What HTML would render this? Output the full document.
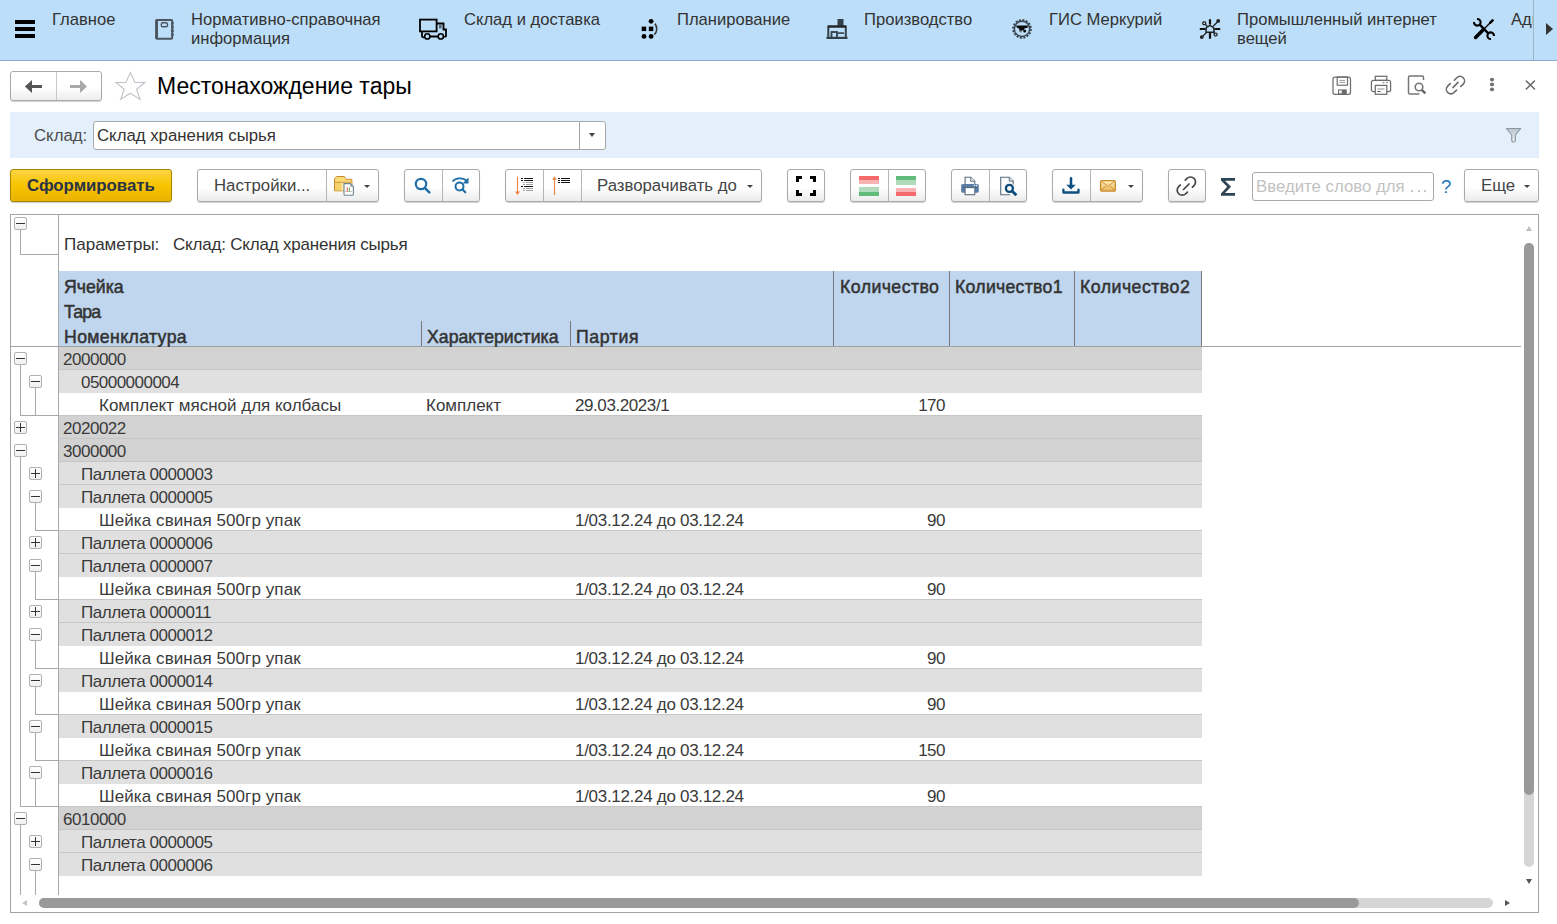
<!DOCTYPE html>
<html><head><meta charset="utf-8">
<style>
*{box-sizing:border-box;margin:0;padding:0}
html,body{width:1557px;height:924px;overflow:hidden;background:#fff;font-family:"Liberation Sans",sans-serif;color:#333}
.a{position:absolute}
.t{position:absolute;white-space:nowrap;line-height:1}
#top{position:absolute;left:0;top:0;width:1557px;height:61px;background:#bcdef8;border-bottom:1px solid #8aaccc}
.nav{font-size:16.6px;color:#333;line-height:19px}
.btn{position:absolute;border:1px solid #aaa;border-radius:3px;background:linear-gradient(#fff 0%,#fff 55%,#ececec 100%);box-shadow:0 1px 1px rgba(0,0,0,.18)}
.div{position:absolute;top:0;bottom:0;width:1px;background:#b5b5b5}
.tri{position:absolute;width:0;height:0;border-left:3px solid transparent;border-right:3px solid transparent;border-top:3px solid #444}
.row{position:absolute;left:59px;width:1143px;height:23px}
.l1{background:#d2d2d2}
.l2{background:#e0e0e0}
.l3{background:#fff}
.bb{border-bottom:1px solid #c4c4c4}
.rt{position:absolute;top:4px;font-size:17px;line-height:18px;color:#3a3a3a;white-space:nowrap}
.box{position:absolute;width:13px;height:13px;border:1px solid #b0b0b0;border-radius:2px;background:linear-gradient(#fff,#f0f0f0)}
.box:before{content:"";position:absolute;left:1px;top:5px;width:9px;height:1px;background:#333}
.box.p:after{content:"";position:absolute;left:5px;top:1px;width:1px;height:9px;background:#333}
.vl{position:absolute;width:1px;background:#a8a8a8}
.hl{position:absolute;height:1px;background:#a8a8a8}
.hd{position:absolute;font-size:16.8px;font-weight:bold;color:#333;white-space:nowrap;line-height:1}
</style></head><body>

<!-- TOP SECTIONS BAR -->
<div id="top">
  <!-- hamburger -->
  <div class="a" style="left:15px;top:20px;width:20px;height:4px;background:#000"></div>
  <div class="a" style="left:15px;top:27px;width:20px;height:4px;background:#000"></div>
  <div class="a" style="left:15px;top:34px;width:20px;height:4px;background:#000"></div>
  <div class="t nav" style="left:52px;top:10px">Главное</div>

  <svg class="a" style="left:154px;top:18px" width="22" height="22" viewBox="0 0 22 22">
    <rect x="2.2" y="1.9" width="16" height="18.9" rx="1" fill="none" stroke="#4a5560" stroke-width="2"/>
    <rect x="1.5" y="1.5" width="2.5" height="19.5" fill="#4a5560"/>
    <rect x="7.3" y="4.8" width="6.2" height="4" rx="1.6" fill="none" stroke="#4a5560" stroke-width="1.4"/>
    <path d="M18.5 4v14" stroke="#4a5560" stroke-width="2.4" stroke-dasharray="2.4 1.4"/>
  </svg>
  <div class="t nav" style="left:191px;top:10px">Нормативно-справочная<br>информация</div>

  <svg class="a" style="left:418px;top:17px" width="31" height="23" viewBox="0 0 31 23">
    <rect x="2" y="2.6" width="16.6" height="11.8" fill="none" stroke="#000" stroke-width="1.8"/>
    <path d="M19 6.5h6.5v6h2.5v6.5l-1.6 1.3" fill="none" stroke="#000" stroke-width="1.8"/>
    <rect x="21" y="7.5" width="2.6" height="4" fill="#567"/>
    <path d="M4 14.5v5l2 1.3M12 19.5h8" fill="none" stroke="#000" stroke-width="1.8"/>
    <circle cx="9.3" cy="19.4" r="2.6" fill="none" stroke="#000" stroke-width="1.6"/>
    <circle cx="22.8" cy="19.4" r="2.6" fill="none" stroke="#000" stroke-width="1.6"/>
  </svg>
  <div class="t nav" style="left:464px;top:10px">Склад и доставка</div>

  <svg class="a" style="left:638px;top:18px" width="22" height="22" viewBox="0 0 22 22">
    <circle cx="13.1" cy="3.3" r="2.4" fill="#000"/>
    <rect x="3.7" y="8.6" width="4.5" height="4.5" fill="#000"/>
    <rect x="10.8" y="8.6" width="4.5" height="4.5" fill="#000"/>
    <circle cx="6" cy="18.4" r="2.4" fill="#000"/>
    <circle cx="13.1" cy="18.4" r="2.4" fill="#000"/>
    <path d="M16.8 5.6c2.6 2.6 2.6 8.6 -0.5 11" fill="none" stroke="#333" stroke-width="1.5"/>
  </svg>
  <div class="t nav" style="left:677px;top:10px">Планирование</div>

  <svg class="a" style="left:826px;top:18px" width="22" height="22" viewBox="0 0 22 22">
    <rect x="11.5" y="1" width="6" height="7" fill="#33404a"/>
    <path d="M2.3 20V8.5h17.5V20" fill="none" stroke="#33404a" stroke-width="2"/>
    <rect x="2" y="7.5" width="18" height="2" fill="#222"/>
    <rect x="5.5" y="14" width="5.5" height="6" fill="none" stroke="#33404a" stroke-width="1.8"/>
    <rect x="12" y="14.3" width="6" height="1.6" fill="#33404a"/>
    <rect x="0.5" y="18.8" width="21" height="2.2" fill="#33404a"/>
  </svg>
  <div class="t nav" style="left:864px;top:10px">Производство</div>

  <svg class="a" style="left:1011px;top:18px" width="22" height="22" viewBox="0 0 22 22"><circle cx="11" cy="10.9" r="8.9" fill="none" stroke="#3a4652" stroke-width="1.8" stroke-dasharray="2.1 1.4"/><circle cx="11" cy="10.9" r="7.6" fill="none" stroke="#3a4652" stroke-width="1.4"/><path d="M5.2 7.4H17L16.5 9.8L13.4 10.4L12.6 12.2L10.3 12.8L9 14.2L7.6 10.2L5.6 9.4Z" fill="#0a0a0a"/><circle cx="13.7" cy="12.9" r="1.5" fill="#0a0a0a"/><path d="M8.5 11.5L10 14.5L11.3 12.2" fill="none" stroke="#7a8794" stroke-width="0.9"/></svg>
  <div class="t nav" style="left:1049px;top:10px">ГИС Меркурий</div>

  <svg class="a" style="left:1199px;top:18px" width="22" height="22" viewBox="0 0 22 22"><path d="M11 7.3L14.6 9.6L15.2 14.2H7L7.2 9.6Z" fill="none" stroke="#222" stroke-width="1.5" stroke-linejoin="round"/><path d="M11 1.2V6.5M11 14.8V20.8M0.8 11H6.5M15.5 11H21.2" stroke="#111" stroke-width="2.2"/><path d="M14.2 8.2L19.6 2.8M8 14L2.6 19.4M6.3 6.3L8.2 8.2M14.2 14.2L15.4 15.4" stroke="#222" stroke-width="1.3"/><circle cx="19.2" cy="2.9" r="1.9" fill="#222"/><circle cx="2.8" cy="19.1" r="1.9" fill="#222"/><circle cx="5.2" cy="5.2" r="1.5" fill="none" stroke="#222" stroke-width="1.3"/><circle cx="16.6" cy="16.6" r="1.5" fill="none" stroke="#222" stroke-width="1.3"/></svg>
  <div class="t nav" style="left:1237px;top:10px">Промышленный интернет<br>вещей</div>

  <svg class="a" style="left:1472px;top:17px" width="24" height="24" viewBox="0 0 24 24"><path d="M3.6 20.4L10.5 13.5" stroke="#000" stroke-width="3.6" stroke-linecap="round"/><path d="M10.5 13.5L19.5 4.5" stroke="#000" stroke-width="1.5"/><path d="M18.3 5.7L20.6 3.4" stroke="#000" stroke-width="2.6" stroke-linecap="round"/><path d="M7.2 7.2L16.8 16.8" stroke="#000" stroke-width="2.4"/><path d="M5.01 2.01A3.3 3.3 0 1 1 2.01 5.01" fill="none" stroke="#000" stroke-width="2.1"/><path d="M18.99 21.99A3.3 3.3 0 1 1 21.99 18.99" fill="none" stroke="#000" stroke-width="2.1"/></svg>
  <div class="a" style="left:1511px;top:0;width:22px;height:60px;overflow:hidden"><div class="t nav" style="left:0;top:10px">Администрирование</div></div>
  <div class="a" style="left:1533px;top:0;width:1px;height:60px;background:#9db5cb"></div>
  <div class="a" style="left:1546px;top:23px;width:0;height:0;border-top:6px solid transparent;border-bottom:6px solid transparent;border-left:7px solid #333"></div>
</div>


<!-- TITLE ROW -->
<div class="btn" style="left:10px;top:71px;width:92px;height:30px"></div>
<div class="div" style="left:56px;top:72px;height:28px;background:#c8c8c8"></div>
<svg class="a" style="left:20px;top:76px" width="26" height="22" viewBox="0 0 26 22"><path d="M4.9 10.5L12 4V9H22V12H12V17Z" fill="#555"/></svg>
<svg class="a" style="left:66px;top:76px" width="26" height="22" viewBox="0 0 26 22"><path d="M20.9 10.5L14 4V9H4V12H14V17Z" fill="#a8a8a8"/></svg>
<svg class="a" style="left:110px;top:66px" width="40" height="40" viewBox="0 0 40 40"><path d="M20.4 6.5L24.9 16.5H34.8L26.6 23.2L30.2 33.5L20.4 27.2L10.6 33.5L14.2 23.2L6 16.5H15.9Z" fill="none" stroke="#bfc4c9" stroke-width="1.1" stroke-linejoin="miter"/></svg>
<div class="t" style="left:157px;top:75px;font-size:23px;color:#000">Местонахождение тары</div>

<svg class="a" style="left:1332px;top:76px" width="21" height="19" viewBox="0 0 21 19"><path d="M3 1h13.5a2 2 0 0 1 2 2v13.3a2 2 0 0 1-2 2H3a2 2 0 0 1-2-2V3a2 2 0 0 1 2-2z" fill="none" stroke="#6e6e6e" stroke-width="1.25"/><rect x="5.2" y="1" width="10.3" height="8.2" fill="none" stroke="#6e6e6e" stroke-width="1.2"/><path d="M7.5 4.4h5.6M7.5 6.4h5.6" stroke="#9a9a9a" stroke-width="1"/><rect x="6" y="13.4" width="8.7" height="4.8" fill="#6a6a6a"/><rect x="7" y="14.4" width="2.8" height="2.9" fill="#f4f4f4"/></svg>
<svg class="a" style="left:1370px;top:75px" width="22" height="21" viewBox="0 0 22 21"><rect x="5.3" y="1.3" width="11.5" height="4.1" fill="none" stroke="#6e6e6e" stroke-width="1.25"/><path d="M5 16.5H3.2a1.8 1.8 0 0 1-1.8-1.8V7.2a1.8 1.8 0 0 1 1.8-1.8h15.6a1.8 1.8 0 0 1 1.8 1.8v7.5a1.8 1.8 0 0 1-1.8 1.8H17" fill="none" stroke="#6e6e6e" stroke-width="1.25"/><rect x="5.3" y="10.4" width="11.5" height="8.9" fill="#fff" stroke="#6e6e6e" stroke-width="1.25"/><path d="M7.3 14h7.2" stroke="#999" stroke-width="1.1"/><path d="M7.3 16.5h3.4" stroke="#666" stroke-width="1.1"/><path d="M12.8 7.7h1.6M16.2 7.7h1.6" stroke="#888" stroke-width="1.2"/></svg>
<svg class="a" style="left:1407px;top:75px" width="21" height="21" viewBox="0 0 21 21"><path d="M12.5 19H3a1.5 1.5 0 0 1-1.5-1.5v-15A1.5 1.5 0 0 1 3 1h12a1.5 1.5 0 0 1 1.5 1.5v2.5" fill="none" stroke="#777" stroke-width="1.5"/><circle cx="12" cy="12" r="3.8" fill="none" stroke="#777" stroke-width="1.6"/><path d="M14.8 14.8l3.5 3.5" stroke="#666" stroke-width="2.5"/></svg>
<svg class="a" style="left:1444px;top:74px" width="24" height="24" viewBox="0 0 24 24"><path d="M10.3 6.2L12.8 3.7A4.5 4.5 0 0 1 19.2 10.1L16.8 12.5M6.2 9.6L3.7 12.1A4.5 4.5 0 0 0 10.1 18.5L12.5 16.1M8.9 13.6L14 8.4" fill="none" stroke="#6a6a6a" stroke-width="1.6" stroke-linecap="round"/></svg>
<svg class="a" style="left:1488px;top:76px" width="8" height="18" viewBox="0 0 8 18"><ellipse cx="4" cy="3.6" rx="2.1" ry="1.9" fill="#727272"/><ellipse cx="4" cy="8.4" rx="2.1" ry="1.9" fill="#727272"/><ellipse cx="4" cy="13.4" rx="2.1" ry="1.9" fill="#727272"/></svg>
<svg class="a" style="left:1524px;top:78px" width="13" height="13" viewBox="0 0 13 13"><path d="M2.3 3L10.5 11M10.5 3L2.3 11" stroke="#6a6a6a" stroke-width="1.6" stroke-linecap="round"/></svg>

<!-- FILTER PANEL -->
<div class="a" style="left:10px;top:112px;width:1529px;height:46px;background:#e3effb"></div>
<div class="t" style="left:34px;top:128px;font-size:16.8px;color:#4d4d4d">Склад:</div>
<div class="a" style="left:93px;top:121px;width:513px;height:29px;background:#fff;border:1px solid #a9a9a9;border-radius:3px"></div>
<div class="a" style="left:579px;top:122px;width:1px;height:27px;background:#a6a6a6"></div>
<div class="a" style="left:589px;top:133px;width:0;height:0;border-left:3px solid transparent;border-right:3px solid transparent;border-top:4px solid #444"></div>
<div class="t" style="left:97px;top:128px;font-size:16.8px;color:#333">Склад хранения сырья</div>
<svg class="a" style="left:1504px;top:126px" width="20" height="18" viewBox="0 0 20 18"><defs><linearGradient id="fun" x1="0" y1="0" x2="0" y2="1"><stop offset="0" stop-color="#bcc4cd"/><stop offset="1" stop-color="#f0f1f3"/></linearGradient></defs><path d="M2.5 2.5H16.7L11.4 9V14.2A1.85 1.85 0 0 1 7.7 14.2V9Z" fill="url(#fun)" stroke="#8796a5" stroke-width="1.1" stroke-linejoin="round"/></svg>

<!-- TOOLBAR -->
<div class="a" style="left:10px;top:169px;width:162px;height:33px;border:1px solid #a88500;border-radius:3px;background:linear-gradient(#fdd444,#f7c400 50%,#ebb300);box-shadow:0 1px 1px rgba(0,0,0,.2)"></div>
<div class="t" style="left:27px;top:178px;font-size:16.8px;font-weight:bold;color:#2b3346">Сформировать</div>

<div class="btn" style="left:197px;top:169px;width:182px;height:33px"></div>
<div class="div" style="left:326px;top:170px;height:31px"></div>
<div class="t" style="left:214px;top:178px;font-size:16.8px;color:#444">Настройки...</div>
<svg class="a" style="left:332px;top:174px" width="24" height="24" viewBox="0 0 24 24"><path d="M2.5 16.8V4.6L5 2.5H12.3L14.3 5.4H19.9V16.8Z" fill="#fbdc78" stroke="#c98a2e" stroke-width="1"/><path d="M2.5 8.3H19.9" stroke="#c98a2e" stroke-width="1"/><path d="M3 8.8H19.4V16.3H3z" fill="#f5d36a"/><path d="M9.5 8.8H19.4V16.3H9.5z" fill="#fdeaa8"/><path d="M12 9.6H18.3L21.4 12.7V20.3A1 1 0 0 1 20.4 21.3H13A1 1 0 0 1 12 20.3Z" fill="#fff" stroke="#6f8391" stroke-width="1.1"/><path d="M18.3 9.6V12.7H21.4" fill="#8a9aa6"/><path d="M15.4 17.5V13.5" stroke="#e23b2a" stroke-width="0.9"/><path d="M17.4 17.5V13.5" stroke="#4ea83a" stroke-width="0.9"/><path d="M13.2 17.5H20" stroke="#999" stroke-width="0.6"/></svg>
<div class="tri" style="left:364px;top:185px"></div>

<div class="btn" style="left:404px;top:169px;width:76px;height:33px"></div>
<div class="div" style="left:442px;top:170px;height:31px"></div>
<svg class="a" style="left:413px;top:176px" width="20" height="20" viewBox="0 0 20 20"><circle cx="8" cy="8" r="5.2" fill="none" stroke="#1f6ea8" stroke-width="2.2"/><path d="M11.8 11.8l4.5 4.5" stroke="#1f6ea8" stroke-width="2.6" stroke-linecap="round"/></svg>
<svg class="a" style="left:450px;top:175px" width="22" height="22" viewBox="0 0 22 22"><path d="M2.5 6.5a9 7 0 0 1 14-1" fill="none" stroke="#1f6ea8" stroke-width="1.8"/><path d="M18.5 2.5v6h-6z" fill="#1f6ea8"/><circle cx="9.5" cy="11.5" r="4" fill="none" stroke="#1f6ea8" stroke-width="2"/><path d="M12.3 14.3l3 3" stroke="#1f6ea8" stroke-width="2.2" stroke-linecap="round"/></svg>

<div class="btn" style="left:505px;top:169px;width:257px;height:33px"></div>
<div class="div" style="left:543px;top:170px;height:31px"></div>
<div class="div" style="left:581px;top:170px;height:31px"></div>
<svg class="a" style="left:510px;top:174px" width="28" height="24" viewBox="0 0 28 24"><path d="M7.5 2.8V19" stroke="#f0823f" stroke-width="1.1"/><path d="M5 17.6H10L7.5 21z" fill="#f0823f"/><path d="M11 4.5H13M14.1 4.5H23M11 6.5H13M14.1 6.5H23M11 12.5H13M14.1 12.5H23" stroke="#111" stroke-width="1.1"/><path d="M13 8.5H15M16 8.5H23M13 10.5H15M16 10.5H23M13 14.5H15M16 14.5H23M13 16.5H15M16 16.5H23" stroke="#999" stroke-width="0.9"/></svg>
<svg class="a" style="left:548px;top:174px" width="26" height="24" viewBox="0 0 26 24"><path d="M6.5 5V21" stroke="#f0823f" stroke-width="1.1"/><path d="M4 5.8H9L6.5 2.6z" fill="#f0823f"/><path d="M10 4.5H12M13 4.5H22M10 6.5H12M13 6.5H22M10 8.5H12M13 8.5H22" stroke="#111" stroke-width="1.1"/></svg>
<div class="t" style="left:597px;top:178px;font-size:16.8px;color:#444">Разворачивать до</div>
<div class="tri" style="left:747px;top:185px"></div>

<div class="btn" style="left:787px;top:169px;width:38px;height:33px"></div>
<svg class="a" style="left:796px;top:176px" width="20" height="20" viewBox="0 0 20 20"><path d="M1.5 6V1.5H6M14 1.5H18.5V6M18.5 14V18.5H14M6 18.5H1.5V14" fill="none" stroke="#000" stroke-width="3"/></svg>

<div class="btn" style="left:850px;top:169px;width:76px;height:33px"></div>
<div class="div" style="left:888px;top:170px;height:31px"></div>
<div class="a" style="left:859px;top:176px;width:20px;height:4px;background:#f46a6a"></div>
<div class="a" style="left:859px;top:180px;width:20px;height:3.5px;background:#f8b3b3"></div>
<div class="a" style="left:859px;top:187px;width:20px;height:5px;background:#b0dcbc"></div>
<div class="a" style="left:859px;top:192px;width:20px;height:4px;background:#62bb7a"></div>
<div class="a" style="left:896px;top:176px;width:20px;height:4px;background:#62bb7a"></div>
<div class="a" style="left:896px;top:180px;width:20px;height:4.5px;background:#b0dcbc"></div>
<div class="a" style="left:896px;top:188px;width:20px;height:4px;background:#f8b3b3"></div>
<div class="a" style="left:896px;top:192px;width:20px;height:4px;background:#f46a6a"></div>

<div class="btn" style="left:951px;top:169px;width:76px;height:33px"></div>
<div class="div" style="left:989px;top:170px;height:31px"></div>
<svg class="a" style="left:958px;top:174px" width="24" height="24" viewBox="0 0 24 24"><path d="M7.1 10.2V3.2H12.7L16.8 7.3V10.2" fill="#fff" stroke="#5a6d80" stroke-width="1.1"/><path d="M12.7 3.2V7.3H16.8" fill="#eef2f6" stroke="#5a6d80" stroke-width="1"/><rect x="3.1" y="10" width="17.7" height="8.7" rx="1.6" fill="#5b7ea6"/><path d="M5 13.4H19" stroke="#3f5f86" stroke-width="1"/><rect x="7.1" y="13.6" width="9.7" height="7.1" fill="#fff" stroke="#5a6d80" stroke-width="1.1"/><circle cx="16.4" cy="11.6" r="0.75" fill="#fff"/><circle cx="18.5" cy="11.6" r="0.75" fill="#fff"/></svg>
<svg class="a" style="left:998px;top:174px" width="24" height="24" viewBox="0 0 24 24"><path d="M12 20.7H2.7V3.2H11.3L15.2 7.1V10.5" fill="#fafafa" stroke="#5a6d80" stroke-width="1.1"/><path d="M11.3 3.2V7.1H15.2" fill="#eef2f6" stroke="#5a6d80" stroke-width="1"/><circle cx="11.4" cy="14.4" r="3.5" fill="#fff" stroke="#0b4a7a" stroke-width="2.3"/><path d="M14 17L18.4 21.3" stroke="#0b4a7a" stroke-width="2.8"/></svg>

<div class="btn" style="left:1052px;top:169px;width:91px;height:33px"></div>
<div class="div" style="left:1090px;top:170px;height:31px"></div>
<svg class="a" style="left:1058px;top:174px" width="24" height="24" viewBox="0 0 24 24"><path d="M13 4.3V11" stroke="#0d4f80" stroke-width="2.5" stroke-linecap="round"/><path d="M8.2 10.8H17.7L13 15.5Z" fill="#0d4f80"/><path d="M5.4 15.6V18.5H20.5V15.6" fill="none" stroke="#0d4f80" stroke-width="2.3" stroke-linecap="round" stroke-linejoin="round"/></svg>
<svg class="a" style="left:1098px;top:178px" width="20" height="16" viewBox="0 0 20 16"><defs><linearGradient id="env" x1="0" y1="0" x2="0" y2="1"><stop offset="0" stop-color="#fdf0b8"/><stop offset="1" stop-color="#e8b55a"/></linearGradient></defs><rect x="2.6" y="2.7" width="14.7" height="10.4" rx="1.2" fill="url(#env)" stroke="#c98a2e" stroke-width="1.3"/><path d="M3.2 3.2L9.9 8.3L16.7 3.2M3.2 12.6L7.7 8M16.7 12.6L12.2 8" fill="none" stroke="#c98a2e" stroke-width="0.9"/></svg>
<div class="tri" style="left:1128px;top:185px"></div>

<div class="btn" style="left:1168px;top:169px;width:38px;height:33px"></div>
<svg class="a" style="left:1175px;top:174px" width="24" height="24" viewBox="0 0 24 24"><path d="M10.3 6.1L11.96 4.46A5 5 0 0 1 19.04 11.54L17.4 13.2M5.3 11L3.66 12.66A5 5 0 0 0 10.74 19.74L12.4 18.1M8.5 15.5L14 10" fill="none" stroke="#444" stroke-width="1.7" stroke-linecap="round"/></svg>
<svg class="a" style="left:1219px;top:176px" width="18" height="22" viewBox="0 0 18 22"><path d="M2 2H16V4.8H6L12 10.8L6 17H16V19.8H2V17.5L8.2 10.8L2 4.5Z" fill="#2d4454"/></svg>
<div class="a" style="left:1252px;top:172px;width:182px;height:29px;border:1px solid #a9a9a9;border-radius:3px;background:#fff"></div>
<div class="t" style="left:1256px;top:179px;font-size:16.8px;color:#c2c2c2">Введите слово для</div><div class="a" style="left:1411px;top:190px;width:2px;height:2px;background:#c8c8c8"></div><div class="a" style="left:1417.5px;top:190px;width:2px;height:2px;background:#c8c8c8"></div><div class="a" style="left:1423.5px;top:190px;width:2px;height:2px;background:#c8c8c8"></div>
<div class="t" style="left:1441px;top:178px;font-size:18.5px;color:#1a73c0">?</div>
<div class="btn" style="left:1464px;top:169px;width:75px;height:33px"></div>
<div class="t" style="left:1481px;top:178px;font-size:16.8px;color:#444">Еще</div>
<div class="tri" style="left:1524px;top:185px"></div>

<!-- TABLE -->
<div class="a" style="left:10px;top:214px;width:1529px;height:699px;border:1px solid #a3a3a3"></div>
<div class="vl" style="left:58px;top:215px;height:680px"></div>
<div class="box" style="left:14px;top:217px"></div>
<div class="vl" style="left:20px;top:230px;height:25px"></div>
<div class="hl" style="left:20px;top:254px;width:38px"></div>
<div class="t" style="left:64px;top:234px;font-size:17px;line-height:21px;color:#333">Параметры:</div>
<div class="t" style="left:173px;top:234px;font-size:17px;line-height:21px;color:#333;letter-spacing:-0.2px">Склад: Склад хранения сырья</div>
<div class="a" style="left:59px;top:271px;width:1143px;height:75px;background:#bfd6ee"></div>
<div class="a" style="left:10px;top:346px;width:1511px;height:1px;background:#a0a0a0"></div>
<div class="a" style="left:421px;top:321px;width:1px;height:25px;background:#7a7a7a"></div>
<div class="a" style="left:570px;top:321px;width:1px;height:25px;background:#7a7a7a"></div>
<div class="a" style="left:833px;top:271px;width:1px;height:75px;background:#7a7a7a"></div>
<div class="a" style="left:949px;top:271px;width:1px;height:75px;background:#7a7a7a"></div>
<div class="a" style="left:1074px;top:271px;width:1px;height:75px;background:#7a7a7a"></div>
<div class="a" style="left:1201px;top:271px;width:1px;height:75px;background:#7a7a7a"></div>
<div class="t" style="left:64px;top:277px;font-size:17.7px;line-height:normal;color:#333;-webkit-text-stroke:0.5px #333;letter-spacing:0px">Ячейка</div>
<div class="t" style="left:64px;top:302px;font-size:17.7px;line-height:normal;color:#333;-webkit-text-stroke:0.5px #333;letter-spacing:-0.8px">Тара</div>
<div class="t" style="left:64px;top:327px;font-size:17.7px;line-height:normal;color:#333;-webkit-text-stroke:0.5px #333;letter-spacing:0.36px">Номенклатура</div>
<div class="t" style="left:427px;top:327px;font-size:17.7px;line-height:normal;color:#333;-webkit-text-stroke:0.5px #333;letter-spacing:0px">Характеристика</div>
<div class="t" style="left:576px;top:327px;font-size:17.7px;line-height:normal;color:#333;-webkit-text-stroke:0.5px #333;letter-spacing:0.6px">Партия</div>
<div class="t" style="left:840px;top:277px;font-size:17.7px;line-height:normal;color:#333;-webkit-text-stroke:0.5px #333;letter-spacing:0.44px">Количество</div>
<div class="t" style="left:955px;top:277px;font-size:17.7px;line-height:normal;color:#333;-webkit-text-stroke:0.5px #333;letter-spacing:0.27px">Количество1</div>
<div class="t" style="left:1080px;top:277px;font-size:17.7px;line-height:normal;color:#333;-webkit-text-stroke:0.5px #333;letter-spacing:0.49px">Количество2</div>
<div class="row l1" style="top:347px">
<div class="rt" style="left:4px;letter-spacing:-0.48px">2000000</div>
</div>
<div class="box" style="left:14px;top:352px"></div>
<div class="row l2" style="top:370px">
<div class="rt" style="left:22px;letter-spacing:-0.53px">05000000004</div>
</div>
<div class="a" style="left:59px;top:369px;width:1143px;height:1px;background:#c6c6c6"></div>
<div class="box" style="left:29px;top:375px"></div>
<div class="row l3" style="top:393px">
<div class="rt" style="left:40px;letter-spacing:0px">Комплект мясной для колбасы</div>
<div class="rt" style="left:367px">Комплект</div>
<div class="rt" style="left:516px;letter-spacing:-0.42px">29.03.2023/1</div>
<div class="rt" style="right:257px;letter-spacing:-0.5px">170</div>
</div>
<div class="row l1" style="top:416px">
<div class="rt" style="left:4px;letter-spacing:-0.48px">2020022</div>
</div>
<div class="a" style="left:59px;top:415px;width:1143px;height:1px;background:#c6c6c6"></div>
<div class="box p" style="left:14px;top:421px"></div>
<div class="row l1" style="top:439px">
<div class="rt" style="left:4px;letter-spacing:-0.48px">3000000</div>
</div>
<div class="a" style="left:59px;top:438px;width:1143px;height:1px;background:#c6c6c6"></div>
<div class="box" style="left:14px;top:444px"></div>
<div class="row l2" style="top:462px">
<div class="rt" style="left:22px;letter-spacing:-0.46px">Паллета 0000003</div>
</div>
<div class="a" style="left:59px;top:461px;width:1143px;height:1px;background:#c6c6c6"></div>
<div class="box p" style="left:29px;top:467px"></div>
<div class="row l2" style="top:485px">
<div class="rt" style="left:22px;letter-spacing:-0.46px">Паллета 0000005</div>
</div>
<div class="a" style="left:59px;top:484px;width:1143px;height:1px;background:#c6c6c6"></div>
<div class="box" style="left:29px;top:490px"></div>
<div class="row l3" style="top:508px">
<div class="rt" style="left:40px;letter-spacing:0.09px">Шейка свиная 500гр упак</div>
<div class="rt" style="left:516px;letter-spacing:-0.3px">1/03.12.24 до 03.12.24</div>
<div class="rt" style="right:257px;letter-spacing:-0.5px">90</div>
</div>
<div class="row l2" style="top:531px">
<div class="rt" style="left:22px;letter-spacing:-0.46px">Паллета 0000006</div>
</div>
<div class="a" style="left:59px;top:530px;width:1143px;height:1px;background:#c6c6c6"></div>
<div class="box p" style="left:29px;top:536px"></div>
<div class="row l2" style="top:554px">
<div class="rt" style="left:22px;letter-spacing:-0.46px">Паллета 0000007</div>
</div>
<div class="a" style="left:59px;top:553px;width:1143px;height:1px;background:#c6c6c6"></div>
<div class="box" style="left:29px;top:559px"></div>
<div class="row l3" style="top:577px">
<div class="rt" style="left:40px;letter-spacing:0.09px">Шейка свиная 500гр упак</div>
<div class="rt" style="left:516px;letter-spacing:-0.3px">1/03.12.24 до 03.12.24</div>
<div class="rt" style="right:257px;letter-spacing:-0.5px">90</div>
</div>
<div class="row l2" style="top:600px">
<div class="rt" style="left:22px;letter-spacing:-0.46px">Паллета 0000011</div>
</div>
<div class="a" style="left:59px;top:599px;width:1143px;height:1px;background:#c6c6c6"></div>
<div class="box p" style="left:29px;top:605px"></div>
<div class="row l2" style="top:623px">
<div class="rt" style="left:22px;letter-spacing:-0.46px">Паллета 0000012</div>
</div>
<div class="a" style="left:59px;top:622px;width:1143px;height:1px;background:#c6c6c6"></div>
<div class="box" style="left:29px;top:628px"></div>
<div class="row l3" style="top:646px">
<div class="rt" style="left:40px;letter-spacing:0.09px">Шейка свиная 500гр упак</div>
<div class="rt" style="left:516px;letter-spacing:-0.3px">1/03.12.24 до 03.12.24</div>
<div class="rt" style="right:257px;letter-spacing:-0.5px">90</div>
</div>
<div class="row l2" style="top:669px">
<div class="rt" style="left:22px;letter-spacing:-0.46px">Паллета 0000014</div>
</div>
<div class="a" style="left:59px;top:668px;width:1143px;height:1px;background:#c6c6c6"></div>
<div class="box" style="left:29px;top:674px"></div>
<div class="row l3" style="top:692px">
<div class="rt" style="left:40px;letter-spacing:0.09px">Шейка свиная 500гр упак</div>
<div class="rt" style="left:516px;letter-spacing:-0.3px">1/03.12.24 до 03.12.24</div>
<div class="rt" style="right:257px;letter-spacing:-0.5px">90</div>
</div>
<div class="row l2" style="top:715px">
<div class="rt" style="left:22px;letter-spacing:-0.46px">Паллета 0000015</div>
</div>
<div class="a" style="left:59px;top:714px;width:1143px;height:1px;background:#c6c6c6"></div>
<div class="box" style="left:29px;top:720px"></div>
<div class="row l3" style="top:738px">
<div class="rt" style="left:40px;letter-spacing:0.09px">Шейка свиная 500гр упак</div>
<div class="rt" style="left:516px;letter-spacing:-0.3px">1/03.12.24 до 03.12.24</div>
<div class="rt" style="right:257px;letter-spacing:-0.5px">150</div>
</div>
<div class="row l2" style="top:761px">
<div class="rt" style="left:22px;letter-spacing:-0.46px">Паллета 0000016</div>
</div>
<div class="a" style="left:59px;top:760px;width:1143px;height:1px;background:#c6c6c6"></div>
<div class="box" style="left:29px;top:766px"></div>
<div class="row l3" style="top:784px">
<div class="rt" style="left:40px;letter-spacing:0.09px">Шейка свиная 500гр упак</div>
<div class="rt" style="left:516px;letter-spacing:-0.3px">1/03.12.24 до 03.12.24</div>
<div class="rt" style="right:257px;letter-spacing:-0.5px">90</div>
</div>
<div class="row l1" style="top:807px">
<div class="rt" style="left:4px;letter-spacing:-0.48px">6010000</div>
</div>
<div class="a" style="left:59px;top:806px;width:1143px;height:1px;background:#c6c6c6"></div>
<div class="box" style="left:14px;top:812px"></div>
<div class="row l2" style="top:830px">
<div class="rt" style="left:22px;letter-spacing:-0.46px">Паллета 0000005</div>
</div>
<div class="a" style="left:59px;top:829px;width:1143px;height:1px;background:#c6c6c6"></div>
<div class="box p" style="left:29px;top:835px"></div>
<div class="row l2" style="top:853px">
<div class="rt" style="left:22px;letter-spacing:-0.46px">Паллета 0000006</div>
</div>
<div class="a" style="left:59px;top:852px;width:1143px;height:1px;background:#c6c6c6"></div>
<div class="box" style="left:29px;top:858px"></div>
<div class="vl" style="left:20px;top:365px;height:51px"></div>
<div class="hl" style="left:20px;top:415px;width:38px"></div>
<div class="vl" style="left:35px;top:388px;height:28px"></div>
<div class="hl" style="left:35px;top:415px;width:23px"></div>
<div class="vl" style="left:20px;top:457px;height:350px"></div>
<div class="hl" style="left:20px;top:806px;width:38px"></div>
<div class="vl" style="left:35px;top:503px;height:28px"></div>
<div class="hl" style="left:35px;top:530px;width:23px"></div>
<div class="vl" style="left:35px;top:572px;height:28px"></div>
<div class="hl" style="left:35px;top:599px;width:23px"></div>
<div class="vl" style="left:35px;top:641px;height:28px"></div>
<div class="hl" style="left:35px;top:668px;width:23px"></div>
<div class="vl" style="left:35px;top:687px;height:28px"></div>
<div class="hl" style="left:35px;top:714px;width:23px"></div>
<div class="vl" style="left:35px;top:733px;height:28px"></div>
<div class="hl" style="left:35px;top:760px;width:23px"></div>
<div class="vl" style="left:35px;top:779px;height:28px"></div>
<div class="hl" style="left:35px;top:806px;width:23px"></div>
<div class="vl" style="left:20px;top:825px;height:70px"></div>
<div class="vl" style="left:35px;top:871px;height:24px"></div>
<div class="a" style="left:1526px;top:226px;width:0;height:0;border-left:3px solid transparent;border-right:3px solid transparent;border-bottom:5px solid #bdbdbd"></div>
<div class="a" style="left:1524px;top:243px;width:10px;height:624px;border-radius:5px;background:#d6d6d6"></div>
<div class="a" style="left:1524px;top:243px;width:10px;height:552px;border-radius:5px;background:#9a9a9a"></div>
<div class="a" style="left:1526px;top:879px;width:0;height:0;border-left:3px solid transparent;border-right:3px solid transparent;border-top:5px solid #555"></div>
<div class="a" style="left:22px;top:900px;width:0;height:0;border-top:3px solid transparent;border-bottom:3px solid transparent;border-right:5px solid #c4c4c4"></div>
<div class="a" style="left:39px;top:898px;width:1454px;height:10px;border-radius:5px;background:#d6d6d6"></div>
<div class="a" style="left:39px;top:898px;width:1320px;height:10px;border-radius:5px;background:#9a9a9a"></div>
<div class="a" style="left:1505px;top:900px;width:0;height:0;border-top:3px solid transparent;border-bottom:3px solid transparent;border-left:5px solid #555"></div>
</body></html>
